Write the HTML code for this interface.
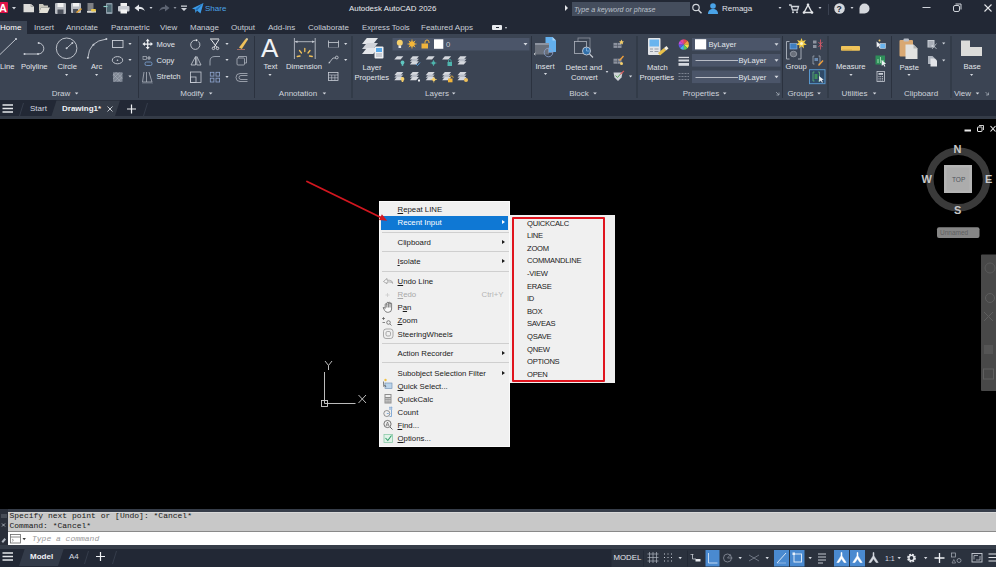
<!DOCTYPE html>
<html><head><meta charset="utf-8"><title>Autodesk AutoCAD 2026</title>
<style>
*{margin:0;padding:0;box-sizing:border-box}
html,body{width:996px;height:567px;overflow:hidden;background:#000}
body{position:relative;font-family:"Liberation Sans",sans-serif;font-size:8px;color:#d6dae0;line-height:1}
.a{position:absolute}
.t{position:absolute;white-space:nowrap;line-height:10px;height:10px}
#title{left:0;top:0;width:996px;height:20px;background:#222835}
#tabs{left:0;top:20px;width:996px;height:14px;background:#222835}
#ribbon{left:0;top:34px;width:996px;height:66px;background:#3b4453}
#ftabs{left:0;top:99.500px;width:996px;height:19.500px;background:#222835}
#canvas{left:0;top:119px;width:996px;height:389px;background:#000}
#cmd{left:0;top:511.500px;width:996px;height:20.500px;background:#c8c8c8}
#cmdin{left:0;top:532px;width:996px;height:13px;background:#fff}
#status{left:0;top:545px;width:996px;height:22px;background:#222835}
.sep{position:absolute;top:36px;width:1px;height:62px;background:#2c3340}
.pl{position:absolute;top:89px;white-space:nowrap;line-height:10px;color:#cdd2da;transform:translateX(-50%)}
.rl{font-size:7.6px;color:#e2e5ea}
.mono{font-family:"Liberation Mono",monospace;font-size:8px;color:#1a1a1a}
.mi{position:absolute;left:17.5px;white-space:nowrap;color:#1a1a1a;font-size:7.8px;line-height:10px}
.ms{position:absolute;left:2px;width:127px;height:1px;background:#cfcfcf}
.si{position:absolute;left:17px;white-space:nowrap;color:#1a1a1a;font-size:7.6px;letter-spacing:-0.25px;line-height:10px}
.arr{position:absolute;width:0;height:0;border-left:3px solid #1a1a1a;border-top:2.5px solid transparent;border-bottom:2.5px solid transparent;left:122px}
</style></head><body>
<div class="a" id="title"></div>
<div class="a" id="tabs"></div>

<!-- TITLE BAR -->
<div class="a" style="left:0;top:1.800px;width:8.200px;height:11.500px;background:#de1248;border-radius:0 1px 1px 0"></div>
<div class="t" style="left:-1px;top:2px;font-size:11px;font-weight:bold;color:#fff;line-height:12px;height:12px">A</div>
<svg class="a" style="left:0;top:0" width="996" height="20" viewBox="0 0 996 20">
 <path d="M12 7h4l-2 2.5z" fill="#cfd3da"/>
 <!-- new -->
 <path d="M23.500 4h7.500l3 2.500v5.700h-10.500z" fill="#dcdcda"/><path d="M31 4v2.500h3" fill="none" stroke="#9a9a98" stroke-width="0.800"/>
 <!-- open -->
 <path d="M39 4h4l1 1.5h4v2h-7l-2 5z" fill="#c9c7bd"/><path d="M41 7.5h9l-2.5 5.5h-8.5z" fill="#e3e1d8"/>
 <!-- save -->
 <rect x="55" y="3" width="11" height="11" rx="1" fill="#b9bcc2"/><rect x="57.5" y="3" width="6" height="4" fill="#f2f2f2"/><rect x="57.5" y="9.5" width="6" height="4.5" fill="#4a4f5a"/>
 <!-- save as -->
 <rect x="71" y="3" width="10" height="10" rx="1" fill="#b9bcc2"/><rect x="73" y="3" width="6" height="3.5" fill="#f2f2f2"/><rect x="73" y="9" width="5" height="4" fill="#4a4f5a"/><path d="M76 12l5-4 1 1.2-5 4z" fill="#e2a43c"/>
 <!-- web -->
 <rect x="87.5" y="3" width="6" height="10" fill="#7d7f83"/><rect x="87" y="11" width="9" height="1.6" fill="#d8d8d8"/><rect x="91" y="9" width="5" height="2.6" rx="1" fill="#e8c64a"/>
 <!-- mobile -->
 <rect x="106" y="3" width="6.5" height="11" rx="1" fill="#8a9aa6"/><rect x="107" y="4.5" width="4.5" height="7.5" fill="#4b6670"/><path d="M103.5 6.5h4" stroke="#8fd0c8" stroke-width="1.2"/>
 <!-- print -->
 <rect x="120.5" y="3" width="6.5" height="3.5" fill="#f0f0f0"/><rect x="118" y="6" width="11.5" height="5.5" rx="1" fill="#c9ccd2"/><rect x="120.5" y="9.5" width="6.5" height="4" fill="#f4f4f4"/>
 <!-- undo -->
 <path d="M134.5 8l4.5-3.5v2.2c3 0 5.2 1.2 5.8 4.5-1.4-1.7-3.2-2.1-5.8-2.1v2.4z" fill="#e4e6ea"/>
 <path d="M149.5 7h3l-1.5 2z" fill="#cfd3da"/>
 <!-- redo -->
 <path d="M169.5 8l-4.5-3.5v2.2c-3 0-5.2 1.2-5.800 4.500 1.400-1.700 3.200-2.100 5.800-2.100v2.400z" fill="#5d6472"/>
 <path d="M173.500 7h3l-1.500 2z" fill="#8d939f"/>
 <path d="M181 5.500h6v1.200h-6z M181 8h6l-3 3z" fill="#cfd3da"/>
 <!-- share -->
 <path d="M192 8.500l11.500-5.500-3 10.500-3.500-3-1.500 2.500-0.500-3.500z" fill="#3d9be6"/><path d="M195 9.500l8.500-6.500-6.500 7.500z" fill="#1f6fb8"/>
 <!-- search box -->
 <path d="M565 5l3 3-3 3z" fill="#e4e6ea"/>
 <rect x="572" y="2" width="118" height="14" fill="#444d5d"/>
 <!-- search icon -->
 <circle cx="696" cy="7.500" r="3.200" fill="none" stroke="#d0d4da" stroke-width="1.200"/><path d="M698.300 10l3.200 3.200" stroke="#d0d4da" stroke-width="1.400"/>
 <!-- user -->
 <circle cx="713" cy="6" r="2.800" fill="#4aa3e8"/><path d="M708 14c0-3.500 2-5 5-5s5 1.500 5 5z" fill="#4aa3e8"/>
 <path d="M778.500 7h3l-1.500 2z" fill="#cfd3da"/>
 <!-- cart -->
 <path d="M789 5h2l1.500 5h5l1-3.500h-6.500" fill="none" stroke="#d0d4da" stroke-width="1.300"/><circle cx="793" cy="12.300" r="1" fill="#d0d4da"/><circle cx="797" cy="12.300" r="1" fill="#d0d4da"/>
 <!-- A triangle -->
 <path d="M808 5l-4 7.500h8z" fill="none" stroke="#e4e6ea" stroke-width="1.400"/><circle cx="808" cy="4.800" r="1.300" fill="#e4e6ea"/><circle cx="804" cy="12.500" r="1.300" fill="#e4e6ea"/><circle cx="812" cy="12.500" r="1.300" fill="#e4e6ea"/>
 <path d="M818.500 7h3l-1.500 2z" fill="#cfd3da"/>
 <rect x="828" y="4" width="1" height="11" fill="#3a4150"/>
 <!-- help -->
 <circle cx="839.500" cy="8.500" r="5.300" fill="#d5d8dd"/>
 <path d="M850.500 7h3l-1.500 2z" fill="#cfd3da"/>
 <!-- chat -->
 <path d="M859.500 8.500a5 5 0 1 1 5 5h-5z" fill="#d5d8dd"/>
 <!-- window ctrls -->
 <rect x="922.500" y="7" width="8" height="1" fill="#cfd3da"/>
 <rect x="953.500" y="5.500" width="6" height="6" rx="1.500" fill="none" stroke="#cfd3da" stroke-width="1"/><path d="M955.500 4h5.500v5.500" fill="none" stroke="#cfd3da" stroke-width="1"/>
 <path d="M984.500 4.500l7 7M991.500 4.500l-7 7" stroke="#e4e6ea" stroke-width="1.100"/>
</svg>
<div class="t" style="left:205px;top:4px;font-size:8px;color:#4aa3e8">Share</div>
<div class="t" id="ttl" style="left:349px;top:4px;font-size:7.900px;color:#e8eaee">Autodesk AutoCAD 2026</div>
<div class="t" style="left:574px;top:4.700px;font-size:7.100px;color:#bcc2cc;font-style:italic">Type a keyword or phrase</div>
<div class="t" style="left:722px;top:4px;font-size:8px;color:#e0e3e8">Remaga</div>
<div class="t" style="left:836.500px;top:3.500px;font-size:8.500px;font-weight:bold;color:#222835">?</div>
<!-- RIBBON TABS -->
<div class="a" style="left:0;top:21px;width:27px;height:13px;background:#3b4453"></div>
<div class="t" style="left:0;top:23px;font-size:8px;color:#fff">Home</div>
<div class="t" style="left:34px;top:23px;color:#c9ced6">Insert</div>
<div class="t" style="left:66px;top:23px;color:#c9ced6">Annotate</div>
<div class="t" style="left:111px;top:23px;color:#c9ced6">Parametric</div>
<div class="t" style="left:160px;top:23px;color:#c9ced6">View</div>
<div class="t" style="left:190px;top:23px;color:#c9ced6">Manage</div>
<div class="t" style="left:231px;top:23px;color:#c9ced6">Output</div>
<div class="t" style="left:268px;top:23px;color:#c9ced6">Add-ins</div>
<div class="t" style="left:308px;top:23px;color:#c9ced6">Collaborate</div>
<div class="t" style="left:362px;top:23px;color:#c9ced6;font-size:7.700px">Express Tools</div>
<div class="t" style="left:421px;top:23px;color:#c9ced6">Featured Apps</div>
<div class="a" style="left:492px;top:25px;width:10px;height:5px;background:#e8eaee;border-radius:1px"></div>
<div class="a" style="left:496px;top:27px;width:3px;height:1px;background:#222835"></div>
<div class="a" style="left:505px;top:26.500px;width:0;height:0;border-top:2px solid #cfd3da;border-left:1.500px solid transparent;border-right:1.500px solid transparent"></div>
<div class="a" id="ribbon"></div>

<!-- RIBBON CONTENT -->
<svg class="a" style="left:0;top:0" width="996" height="120" viewBox="0 0 996 120">
<rect x="138" y="36" width="1" height="62" fill="#2b323f"/>
<rect x="254" y="36" width="1" height="62" fill="#2b323f"/>
<rect x="351.5" y="36" width="1" height="62" fill="#2b323f"/>
<rect x="531" y="36" width="1" height="62" fill="#2b323f"/>
<rect x="636.5" y="36" width="1" height="62" fill="#2b323f"/>
<rect x="782" y="36" width="1" height="62" fill="#2b323f"/>
<rect x="827.5" y="36" width="1" height="62" fill="#2b323f"/>
<rect x="891" y="36" width="1" height="62" fill="#2b323f"/>
<rect x="950.5" y="36" width="1" height="62" fill="#2b323f"/>
<path d="M0 54.5L16 39" stroke="#c9ced6" stroke-width="0.9" fill="none"/><circle cx="16" cy="39" r="1.1" fill="#c9ced6"/>
<path d="M24.500 54h13.500a5.500 5.500 0 0 0 0.600-11" stroke="#c9ced6" stroke-width="0.900" fill="none"/><circle cx="24.500" cy="54" r="1" fill="#c9ced6"/><circle cx="38" cy="54" r="1" fill="#c9ced6"/><circle cx="38.600" cy="43" r="1" fill="#c9ced6"/>
<circle cx="66.600" cy="48.300" r="10.300" stroke="#c9ced6" stroke-width="0.900" fill="none"/><path d="M66.600 48.300L72.400 43" stroke="#c9ced6" stroke-width="0.900"/><circle cx="66.600" cy="48.300" r="1" fill="#c9ced6"/><circle cx="72.400" cy="43" r="1" fill="#c9ced6"/>
<path d="M87.900 57.800Q89 41 106.400 39.100" stroke="#c9ced6" stroke-width="0.900" fill="none"/><circle cx="87.900" cy="57.800" r="1" fill="#c9ced6"/><circle cx="93.500" cy="44.800" r="1" fill="#c9ced6"/><circle cx="106.400" cy="39.100" r="1" fill="#c9ced6"/>
<path d="M65.0 74.0h3.2l-1.6 2z" fill="#d5d9e0"/>
<path d="M95.0 74.0h3.2l-1.6 2z" fill="#d5d9e0"/>
<rect x="112.500" y="40.500" width="10.500" height="7" stroke="#c9ced6" stroke-width="0.900" fill="none"/>
<ellipse cx="117.500" cy="60.200" rx="5.200" ry="3.600" stroke="#c9ced6" stroke-width="0.900" fill="none"/><circle cx="117.500" cy="60.200" r="0.800" fill="#c9ced6"/>
<rect x="113" y="72.300" width="9.500" height="9.500" fill="#7f8794"/><path d="M113 75.500l3-3M113 79l6.500-6.500M114 81.800l8.500-8.500M117.500 81.800l5-5M113 74l7.500 7.500M116 72.300l6.500 6.500" stroke="#aeb4be" stroke-width="0.500"/>
<path d="M128.4 43.0h3.2l-1.6 2z" fill="#d5d9e0"/>
<path d="M128.4 59.0h3.2l-1.6 2z" fill="#d5d9e0"/>
<path d="M128.4 75.5h3.2l-1.6 2z" fill="#d5d9e0"/>
<path d="M147.700 38.800l2 2.500h-1.400v2.200h2.200v-1.400l2.500 2-2.500 2v-1.400h-2.200v2.200h1.400l-2 2.500-2-2.500h1.400v-2.200h-2.200v1.400l-2.500-2 2.500-2v1.400h2.200v-2.200h-1.400z" fill="#f0f2f5"/>
<rect x="143" y="56.500" width="3.500" height="3" stroke="#aeb4be" stroke-width="0.700" fill="none"/><path d="M149 56v4M147 58h4" stroke="#c9ced6" stroke-width="0.800"/><rect x="145" y="62" width="7" height="3.500" rx="1.500" stroke="#7fa6d8" stroke-width="0.800" fill="none"/>
<path d="M144 72l-1.500 10h9.500l-3-10M146.500 72v10" stroke="#aeb4be" stroke-width="0.800" fill="none"/><path d="M142 83h11" stroke="#7d8592" stroke-width="0.700"/>
<path d="M198.500 41.500a4.600 4.600 0 1 1-3-1.300" stroke="#c9ced6" stroke-width="0.900" fill="none"/><circle cx="196.500" cy="40.300" r="1" fill="#f0f2f5"/>
<path d="M195.500 56.500l-4.500 8.500h4.500zM196.800 56.500l4.200 8.500h-4.200z" stroke="#c9ced6" stroke-width="0.800" fill="none"/>
<rect x="190.500" y="72" width="10.500" height="10.500" stroke="#c9ced6" stroke-width="0.800" fill="none"/><rect x="190.500" y="77" width="5.500" height="5.500" stroke="#c9ced6" stroke-width="0.800" fill="none"/>
<path d="M211 39.500l6 8M219 39.500l-5 8M210 39h9" stroke="#e8eaee" stroke-width="1" fill="none"/><circle cx="213.500" cy="48.300" r="1.300" stroke="#e8eaee" stroke-width="0.800" fill="none"/><circle cx="217.500" cy="48.300" r="1.300" stroke="#e8eaee" stroke-width="0.800" fill="none"/>
<path d="M210 65.500v-4.500q0-4.500 5-4.500h5" stroke="#98a0ad" stroke-width="1" fill="none"/>
<rect x="210.300" y="72.300" width="3.600" height="3.800" stroke="#8fa6d0" stroke-width="0.800" fill="none"/><rect x="216" y="72.300" width="3.600" height="3.800" stroke="#8fa6d0" stroke-width="0.800" fill="none"/><rect x="210.300" y="78.200" width="3.600" height="3.800" stroke="#8fa6d0" stroke-width="0.800" fill="none"/><rect x="216" y="78.200" width="3.600" height="3.800" stroke="#8fa6d0" stroke-width="0.800" fill="none"/>
<path d="M225.4 43.0h3.2l-1.6 2z" fill="#d5d9e0"/>
<path d="M225.4 59.0h3.2l-1.6 2z" fill="#d5d9e0"/>
<path d="M225.4 76.0h3.2l-1.6 2z" fill="#d5d9e0"/>
<path d="M239 47.500l6.500-8.500 1.800 1.500-5.500 8.500z" fill="#f0c15a"/><path d="M245.500 39l1.800 1.500 0.700-1.500-1-1z" fill="#f7e2a8"/><path d="M237 49.500h8" stroke="#c97b6a" stroke-width="0.700"/>
<rect x="237" y="58" width="7.500" height="7" rx="1" stroke="#aeb4be" stroke-width="0.800" fill="none"/><path d="M238.500 58v-1.500h8v6.500h-2" stroke="#aeb4be" stroke-width="0.800" fill="none"/>
<path d="M247.500 73.500h-7.500a3.500 3.500 0 0 0 0 8h7.500M247.500 75.500h-6.500a1.700 1.700 0 0 0 0 4h6.500" stroke="#aeb4be" stroke-width="0.800" fill="none"/>
<path d="M294.400 38v21M315.200 38v21M295 41.700h19.500" stroke="#c9ced6" stroke-width="0.800" fill="none"/><path d="M295 41.700l2.500-1.200v2.400zM314.600 41.700l-2.500-1.200v2.400z" fill="#c9ced6"/>
<path d="M304.800 51.500v-3M301.500 53l-2-2.500M308 53l2-2.500M300 56l-2.800 0.500M309.500 56l2.800 0.500" stroke="#f0c15a" stroke-width="1.300" stroke-linecap="round"/>
<path d="M268.4 74.0h3.2l-1.6 2z" fill="#d5d9e0"/>
<path d="M328.500 40.500v7M338.500 40.500v7M328.500 42.500h10" stroke="#c9ced6" stroke-width="0.800" fill="none"/><path d="M329 47.500h9" stroke="#7f8794" stroke-width="0.600"/>
<path d="M329 63l4-5h3" stroke="#c9ced6" stroke-width="0.800" fill="none"/><circle cx="336.800" cy="57.500" r="1.400" stroke="#c9ced6" stroke-width="0.800" fill="none"/><path d="M328.500 63.500l2-0.500-1.500-1.500z" fill="#c9ced6"/>
<rect x="328.500" y="72.500" width="9.500" height="8" stroke="#c9ced6" stroke-width="0.800" fill="none"/><path d="M328.500 75h9.500M328.500 77.800h9.500M331.700 75v5.500M334.900 75v5.500" stroke="#c9ced6" stroke-width="0.600"/>
<path d="M344.09999999999997 43.0h3.2l-1.6 2z" fill="#d5d9e0"/>
<path d="M344.09999999999997 59.0h3.2l-1.6 2z" fill="#d5d9e0"/>
</svg>
<div class="t rl" style="left:0;top:62px">Line</div>
<div class="t rl" style="left:21px;top:62px">Polyline</div>
<div class="t rl" style="left:57.500px;top:62px">Circle</div>
<div class="t rl" style="left:91px;top:62px">Arc</div>
<div class="t rl" style="left:156.500px;top:39.500px">Move</div>
<div class="t rl" style="left:156.500px;top:56px">Copy</div>
<div class="t rl" style="left:156.500px;top:72px">Stretch</div>
<div class="t" style="left:261px;top:35px;font-size:26px;line-height:26px;height:26px;color:#f0f2f5">A</div>
<div class="t rl" style="left:263.500px;top:62px">Text</div>
<div class="t rl" style="left:286px;top:62px">Dimension</div>
<div class="pl" style="left:61px">Draw</div>
<div class="pl" style="left:192px">Modify</div>
<div class="pl" style="left:298px">Annotation</div>
<svg class="a" style="left:0;top:0" width="996" height="120" viewBox="0 0 996 120">
<path d="M74.8 92.4h3.6l-1.8 2.2z" fill="#d5d9e0"/>
<path d="M208.89999999999998 92.4h3.6l-1.8 2.2z" fill="#d5d9e0"/>
<path d="M322.59999999999997 92.4h3.6l-1.8 2.2z" fill="#d5d9e0"/>
<path d="M451.9 92.4h3.6l-1.8 2.2z" fill="#d5d9e0"/>
<path d="M593.2 92.4h3.6l-1.8 2.2z" fill="#d5d9e0"/>
<path d="M722.9000000000001 92.4h3.6l-1.8 2.2z" fill="#d5d9e0"/>
<path d="M817.2 92.4h3.6l-1.8 2.2z" fill="#d5d9e0"/>
<path d="M872.8000000000001 92.4h3.6l-1.8 2.2z" fill="#d5d9e0"/>
<path d="M975.7 92.4h3.6l-1.8 2.2z" fill="#d5d9e0"/>
<path d="M776 92l3 3M779 92.500v2.500h-2.500" stroke="#aeb4be" stroke-width="0.700" fill="none"/>
<path d="M985.500 92l3 3M988.500 92.500v2.500h-2.500" stroke="#aeb4be" stroke-width="0.700" fill="none"/>
<path d="M366.8 38h11.2l-4.8 6h-11.2z" fill="#e4e6ea"/>
<path d="M366.8 43h11.2l-4.8 6h-11.2z" fill="#d0d3d9"/>
<path d="M366.8 48h11.2l-4.8 6h-11.2z" fill="#e4e6ea"/>
<rect x="374.500" y="46.500" width="9" height="12" rx="1" fill="#eef0f3"/><rect x="376" y="48" width="6" height="4" fill="#59a9e8"/><path d="M376 54h6M376 56h6" stroke="#8d939f" stroke-width="0.800"/>
<rect x="392.500" y="38" width="137" height="12.500" fill="#4b5569"/>
<circle cx="399.800" cy="42.800" r="3" fill="#f5cf6b"/><rect x="398.500" y="45.500" width="2.600" height="2.500" fill="#e8e8e8"/>
<circle cx="412" cy="44" r="2.800" fill="#f5b73a"/><path d="M412 39.500v9M407.500 44h9M408.800 40.800l6.400 6.400M415.200 40.800l-6.400 6.400" stroke="#f5b73a" stroke-width="0.900"/>
<rect x="421.500" y="43.500" width="6.500" height="5" fill="#f0b43c"/><path d="M425 43.500v-1.500a2 2 0 0 1 4 0v1" stroke="#f0b43c" stroke-width="1" fill="none"/>
<rect x="434" y="39.300" width="9.300" height="9.500" fill="#fff"/>
<path d="M523.5 43.099999999999994h4l-2.0 2.4z" fill="#d5d9e0"/>
<path d="M397.0 56.2h6.3l-2.6999999999999997 3.2h-6.3z" fill="#d5d8de"/>
<path d="M412.59999999999997 56.2h6.3l-2.6999999999999997 3.2h-6.3z" fill="#d5d8de"/>
<path d="M412.59999999999997 58.7h6.3l-2.6999999999999997 3.2h-6.3z" fill="#b9bec8"/>
<path d="M412.59999999999997 61.2h6.3l-2.6999999999999997 3.2h-6.3z" fill="#d5d8de"/>
<path d="M428.4 56.2h6.3l-2.6999999999999997 3.2h-6.3z" fill="#d5d8de"/>
<path d="M444.8 56.2h6.3l-2.6999999999999997 3.2h-6.3z" fill="#d5d8de"/>
<path d="M460.2 56.2h6.3l-2.6999999999999997 3.2h-6.3z" fill="#d5d8de"/>
<path d="M460.2 58.7h6.3l-2.6999999999999997 3.2h-6.3z" fill="#b9bec8"/>
<path d="M460.2 61.2h6.3l-2.6999999999999997 3.2h-6.3z" fill="#d5d8de"/>
<path d="M397.0 72.0h6.3l-2.6999999999999997 3.2h-6.3z" fill="#d5d8de"/>
<path d="M397.0 74.5h6.3l-2.6999999999999997 3.2h-6.3z" fill="#b9bec8"/>
<path d="M397.0 77.0h6.3l-2.6999999999999997 3.2h-6.3z" fill="#d5d8de"/>
<path d="M412.59999999999997 72.0h6.3l-2.6999999999999997 3.2h-6.3z" fill="#d5d8de"/>
<path d="M412.59999999999997 74.5h6.3l-2.6999999999999997 3.2h-6.3z" fill="#b9bec8"/>
<path d="M412.59999999999997 77.0h6.3l-2.6999999999999997 3.2h-6.3z" fill="#d5d8de"/>
<path d="M428.4 72.0h6.3l-2.6999999999999997 3.2h-6.3z" fill="#d5d8de"/>
<path d="M428.4 74.5h6.3l-2.6999999999999997 3.2h-6.3z" fill="#b9bec8"/>
<path d="M428.4 77.0h6.3l-2.6999999999999997 3.2h-6.3z" fill="#d5d8de"/>
<path d="M444.8 72.0h6.3l-2.6999999999999997 3.2h-6.3z" fill="#d5d8de"/>
<path d="M444.8 74.5h6.3l-2.6999999999999997 3.2h-6.3z" fill="#b9bec8"/>
<path d="M444.8 77.0h6.3l-2.6999999999999997 3.2h-6.3z" fill="#d5d8de"/>
<path d="M460.2 72.0h6.3l-2.6999999999999997 3.2h-6.3z" fill="#d5d8de"/>
<path d="M460.2 74.5h6.3l-2.6999999999999997 3.2h-6.3z" fill="#b9bec8"/>
<path d="M460.2 77.0h6.3l-2.6999999999999997 3.2h-6.3z" fill="#d5d8de"/>
<circle cx="402.500" cy="62.500" r="1.900" fill="#5fc6c0"/><rect x="401.700" y="64" width="1.600" height="1.800" fill="#5fc6c0"/>
<path d="M416 64l1.500 1.500 2.500-3" stroke="#5b9fd8" stroke-width="1" fill="none"/>
<circle cx="433.500" cy="63" r="1.800" fill="#4fb5ae"/><path d="M433.500 60v6M430.500 63h6" stroke="#4fb5ae" stroke-width="0.700"/>
<rect x="447.500" y="62" width="4.500" height="4" fill="#4fb5ae"/><path d="M448.500 62v-1.200a1.300 1.300 0 0 1 2.600 0v1.200" stroke="#4fb5ae" stroke-width="0.800" fill="none"/>
<circle cx="402.500" cy="79" r="1.900" fill="#f5cf6b"/><rect x="401.700" y="80.500" width="1.600" height="1.500" fill="#f5cf6b"/>
<rect x="418" y="79.500" width="2" height="2" fill="#f0f2f5"/>
<circle cx="433.800" cy="79.500" r="1.700" fill="#f5cf6b"/><path d="M433.800 76.500v6M430.800 79.500h6" stroke="#f5cf6b" stroke-width="0.700"/>
<rect x="448" y="78.500" width="4.500" height="3.800" fill="#f0b43c"/><path d="M450.500 78.500v-1.200a1.300 1.300 0 0 1 2.600 0v0.600" stroke="#f0b43c" stroke-width="0.800" fill="none"/>
<circle cx="466" cy="80" r="2" fill="#f0c15a"/>
<path d="M545.500 37h7l3.500 3.500v11.500h-10.500z" fill="#63b0ee"/><path d="M552.500 37v3.500h3.500z" fill="#a9d4f7"/>
<rect x="535" y="43" width="14" height="11.500" fill="#6a707b"/><rect x="535" y="43" width="14" height="2" fill="#8d939f"/>
<circle cx="548.500" cy="52.500" r="4.300" stroke="#8fa6d0" stroke-width="0.800" fill="none"/><path d="M548.500 48.200v4.300h4.300" stroke="#8fa6d0" stroke-width="0.700" fill="none"/>
<path d="M535.500 53l-1.500 1 1.500 1" stroke="#f0f2f5" stroke-width="0.700" fill="none"/>
<path d="M543.9 73.0h3.2l-1.6 2z" fill="#d5d9e0"/>
<rect x="578" y="38" width="12" height="12" stroke="#8d939f" stroke-width="0.800" fill="none"/><rect x="574.500" y="41.500" width="12" height="12" stroke="#aeb4be" stroke-width="0.800" fill="#3b4453"/>
<circle cx="586.500" cy="51" r="4" fill="#2f6ea8" stroke="#c9ced6" stroke-width="0.900"/><path d="M589.500 54l3.500 3.500" stroke="#c9ced6" stroke-width="1.100"/><path d="M586.500 47.500v3.500h3" stroke="#8fc0ee" stroke-width="0.700" fill="none"/>
<path d="M605.7 71.1h2.6l-1.3 1.8z" fill="#d5d9e0"/>
<rect x="613.500" y="42.9" width="8" height="5" fill="#8d939f"/><path d="M613.500 45.4h8M617.500 42.9v5" stroke="#4a5160" stroke-width="0.600"/>
<rect x="613.500" y="58.7" width="8" height="5" fill="#8d939f"/><path d="M613.500 61.2h8M617.500 58.7v5" stroke="#4a5160" stroke-width="0.600"/>
<path d="M621.500 39.500l0.800 1.700 1.700 0.300-1.300 1.200 0.300 1.800-1.500-0.900-1.500 0.900 0.300-1.800-1.300-1.200 1.700-0.300z" fill="#f5cf6b"/>
<path d="M619 60l4-4.500 1 1-4 4.500z" fill="#f0a03c"/><circle cx="621.500" cy="63.500" r="1.500" fill="#f5cf6b"/>
<path d="M613.500 72.500h9l-1 5-3.500 3.500-3.500-3.500z" fill="#d0d3d9"/><path d="M615.500 75.500l2 2 3-3.500" stroke="#5aa85a" stroke-width="1" fill="none"/><path d="M620 74l3.500-3.500 0.800 0.800-3.500 3.500z" fill="#e05a5a"/>
<path d="M629.0 75.5h3.2l-1.6 2z" fill="#d5d9e0"/>
<rect x="648" y="38" width="12.500" height="17" rx="1" fill="#e2e4e8"/><rect x="649.500" y="39.500" width="9.500" height="7" fill="#6ab4ee"/><path d="M650 49h3M650 51.500h3M654.500 49h4M654.500 51.500h4" stroke="#8d939f" stroke-width="0.900"/>
<path d="M658 53l6-5 2 2.500-6 5z" fill="#e8c04a"/><path d="M664 48l2.500-2 2 2.500-2.500 2z" fill="#f5efe0"/>
<path d="M683.8 44.5L683.80 39.30A5.2 5.2 0 0 1 687.48 40.82z" fill="#e84a4a"/>
<path d="M683.8 44.5L687.48 40.82A5.2 5.2 0 0 1 689.00 44.50z" fill="#f0a03c"/>
<path d="M683.8 44.5L689.00 44.50A5.2 5.2 0 0 1 687.48 48.18z" fill="#f5e04a"/>
<path d="M683.8 44.5L687.48 48.18A5.2 5.2 0 0 1 683.80 49.70z" fill="#5ac85a"/>
<path d="M683.8 44.5L683.80 49.70A5.2 5.2 0 0 1 680.12 48.18z" fill="#4ab4e8"/>
<path d="M683.8 44.5L680.12 48.18A5.2 5.2 0 0 1 678.60 44.50z" fill="#5a5ae8"/>
<path d="M683.8 44.5L678.60 44.50A5.2 5.2 0 0 1 680.12 40.82z" fill="#c04ae0"/>
<path d="M683.8 44.5L680.12 40.82A5.2 5.2 0 0 1 683.80 39.30z" fill="#e84a9a"/>
<rect x="678.500" y="56.800" width="10.500" height="1.300" fill="#d5d8de"/><rect x="678.500" y="59.500" width="10.500" height="2" fill="#d5d8de"/><rect x="678.500" y="63" width="10.500" height="2.800" fill="#d5d8de"/>
<path d="M678.500 73.500h10.500M678.500 76.500h10.500M678.500 79.500h10.500" stroke="#8d939f" stroke-width="0.800" stroke-dasharray="2 1"/>
<rect x="692" y="38" width="88.500" height="12.600" fill="#4b5569"/>
<path d="M774.5 43.3h4l-2.0 2.4z" fill="#d5d9e0"/>
<rect x="692" y="54" width="88.500" height="12.600" fill="#4b5569"/>
<path d="M774.5 59.3h4l-2.0 2.4z" fill="#d5d9e0"/>
<rect x="692" y="70.5" width="88.500" height="12.600" fill="#4b5569"/>
<path d="M774.5 75.8h4l-2.0 2.4z" fill="#d5d9e0"/>
<rect x="695" y="39.200" width="11.200" height="10.200" fill="#fff"/>
<path d="M695.500 60.500h42.500M695.500 77.500h42.500" stroke="#d5d8de" stroke-width="0.800"/>
<path d="M789.500 41.500h-3v17.500h3M798 41.500h3v17.500h-3" stroke="#aeb4be" stroke-width="0.900" fill="none"/><rect x="790" y="43.500" width="7" height="5.500" fill="#3f7fc0" stroke="#8fb8e8" stroke-width="0.600"/><ellipse cx="793.500" cy="54" rx="3.300" ry="2.800" fill="#6a707b" stroke="#aeb4be" stroke-width="0.600"/>
<path d="M801.500 38l1.200 3 3.200-1-1.700 2.800 2.600 2-3.200 0.500 0.300 3.200-2.400-2.200-2.400 2.200 0.300-3.200-3.200-0.500 2.600-2-1.700-2.800 3.200 1z" fill="#f5cf4a"/><circle cx="801.500" cy="43.500" r="1.500" fill="#fff6c8"/>
<rect x="813" y="40.500" width="3.500" height="3" fill="#8d939f"/><rect x="813" y="45" width="3.500" height="3" fill="#8d939f"/><path d="M820.500 39.500v10M818.500 42l4 5M822.500 42l-4 5" stroke="#e05a6a" stroke-width="0.800"/>
<path d="M814.500 56h-1.500v8h1.500M818.500 56h1.500v8h-1.500" stroke="#aeb4be" stroke-width="0.700" fill="none"/><rect x="814.500" y="58" width="3.500" height="3" fill="#6a8ab0"/><path d="M818 65l4.500-5 1 1-4.500 5z" fill="#f0a03c"/>
<rect x="809.500" y="69.700" width="15.500" height="14" fill="#2f4a68" stroke="#5b9fd8" stroke-width="0.900"/><path d="M814.500 72h-1.500v9h1.500M818 72h1.500v9h-1.500" stroke="#5fb87a" stroke-width="0.800" fill="none"/><rect x="814.500" y="74" width="3" height="5" fill="#3f8f5a"/><path d="M819 76l0.300 6 1.500-1.500 1.200 2.300 0.900-0.500-1.200-2.200 2-0.300z" fill="#f0f2f5"/>
<rect x="841" y="46" width="19" height="4.800" rx="0.800" fill="#f0c45a"/><path d="M843 49v1.800M845 49v1.800M847 49v1.800M849 49v1.800M851 49v1.800" stroke="#b8923a" stroke-width="0.500"/>
<path d="M849.4 74.0h3.2l-1.6 2z" fill="#d5d9e0"/>
<path d="M876.500 41.500l0.300 6 1.500-1.500 1.200 2.300 0.900-0.500-1.200-2.200 2-0.300z" fill="#f0f2f5"/><rect x="880" y="43.500" width="5.500" height="5" fill="#6ab4ee" stroke="#d5d8de" stroke-width="0.600"/><circle cx="879.500" cy="40.500" r="1" fill="#f5cf6b"/>
<rect x="875.500" y="55.500" width="9.500" height="9" fill="#2f8f5a"/><path d="M878 63v-4M880.500 63v-6M883 63v-3" stroke="#a8e0b8" stroke-width="0.900"/><path d="M881.500 60l0.300 6 1.500-1.500 1.200 2.300 0.900-0.500-1.200-2.200 2-0.300z" fill="#f0f2f5"/>
<rect x="877" y="71.500" width="7.500" height="10" stroke="#c9ced6" stroke-width="0.800" fill="none"/><rect x="878.500" y="73" width="4.500" height="1.800" fill="#c9ced6"/><path d="M878.500 76.500h4.500M878.500 78.300h4.500M878.500 80h4.500" stroke="#c9ced6" stroke-width="0.900" stroke-dasharray="1 0.750"/>
<rect x="899.500" y="40" width="13.500" height="16.500" rx="1" fill="#d9a872"/><rect x="903.500" y="38.500" width="5.500" height="3" rx="1" fill="#b9bec8"/><path d="M905.500 44.500h8l4 4v10.500h-12z" fill="#e2e2e0"/><path d="M913.500 44.500v4h4z" fill="#b5b5b3"/>
<path d="M907.4 74.0h3.2l-1.6 2z" fill="#d5d9e0"/>
<rect x="927.500" y="40" width="7" height="7.500" fill="#c9ced6"/><path d="M928.500 42h5M928.500 44h5M928.500 46h3" stroke="#5a6170" stroke-width="0.600"/><path d="M932 43.500l4.500 5.500M936.500 43.500l-4.500 5.500" stroke="#aeb4be" stroke-width="0.900"/>
<path d="M928 56h4.500l2 2v6h-6.500z" fill="#aeb4be"/><path d="M930.500 58.500h4.500l2 2v6h-6.500z" fill="#e2e4e8"/>
<path d="M942.1 42.5h3.2l-1.6 2z" fill="#d5d9e0"/>
<path d="M942.1 59.5h3.2l-1.6 2z" fill="#d5d9e0"/>
<path d="M961 40.600h9v6.400h12v9h-21z" fill="#dcdcda"/>
<path d="M970.0 74.0h3.2l-1.6 2z" fill="#d5d9e0"/>
</svg>
<div class="t rl" style="left:362.500px;top:62.500px">Layer</div>
<div class="t rl" style="left:354.500px;top:72.500px">Properties</div>
<div class="t rl" style="left:446px;top:39.500px;color:#c9ced6">0</div>
<div class="t rl" style="left:535.500px;top:61.500px">Insert</div>
<div class="t rl" style="left:565.500px;top:62.500px">Detect and</div>
<div class="t rl" style="left:571px;top:73px">Convert</div>
<div class="t rl" style="left:647px;top:62.500px">Match</div>
<div class="t rl" style="left:639.500px;top:72.500px">Properties</div>
<div class="t rl" style="left:708.500px;top:39.500px">ByLayer</div>
<div class="t rl" style="left:738.500px;top:55.500px">ByLayer</div>
<div class="t rl" style="left:738.500px;top:72.500px">ByLayer</div>
<div class="t rl" style="left:785.500px;top:62px">Group</div>
<div class="t rl" style="left:836px;top:62px">Measure</div>
<div class="t rl" style="left:899.500px;top:62.500px">Paste</div>
<div class="t rl" style="left:963.500px;top:62px">Base</div>
<div class="pl" style="left:437px">Layers</div>
<div class="pl" style="left:579px">Block</div>
<div class="pl" style="left:701px">Properties</div>
<div class="pl" style="left:800.500px">Groups</div>
<div class="pl" style="left:854.500px">Utilities</div>
<div class="pl" style="left:921px">Clipboard</div>
<div class="pl" style="left:962.500px">View</div>
<!-- RIBBON3 -->
<div class="a" id="ftabs"></div>
<div class="a" id="canvas"></div>
<div class="a" id="cmd"></div>
<div class="a" id="cmdin"></div>
<div class="a" id="status"></div>

<!-- FILE TABS -->
<div class="a" style="left:0;top:116px;width:996px;height:3px;background:#343b47"></div>
<svg class="a" style="left:0;top:99px" width="200" height="20" viewBox="0 99 200 20">
 <path d="M2.500 105h10.500M2.500 108.500h10.500M2.500 112h10.500" stroke="#e4e6ea" stroke-width="1.300"/>
 <path d="M19.500 116l4-13" stroke="#3a4150" stroke-width="0.800"/>
 <path d="M51.500 116l5-15.500h63.500l-5 15.500z" fill="#343b47"/>
 <path d="M107.500 106.500l5 5M112.500 106.500l-5 5" stroke="#d5d9e0" stroke-width="0.900"/>
 <path d="M131.500 104.500v9M127 109h9" stroke="#f0f2f5" stroke-width="1.200"/>
 <path d="M143.500 116l4-13" stroke="#3a4150" stroke-width="0.800"/>
</svg>
<div class="t" style="left:30px;top:104px;font-size:8px;color:#d5d9e0">Start</div>
<div class="t" style="left:62px;top:104px;font-size:8px;font-weight:bold;color:#f0f2f5">Drawing1*</div>
<!-- CANVAS ITEMS -->
<svg class="a" style="left:0;top:119px" width="996" height="389" viewBox="0 119 996 389">
 <!-- UCS -->
 <path d="M324.500 372v31.500h31" stroke="#d0d0d0" stroke-width="0.900" fill="none"/>
 <rect x="321.500" y="400.500" width="6" height="6" stroke="#d0d0d0" stroke-width="0.900" fill="none"/>
 <path d="M325 361l3.500 4.500 3.500-4.500M328.500 365.500v4.500" stroke="#d0d0d0" stroke-width="0.900" fill="none"/>
 <path d="M358.500 395l7.500 8M366 395l-7.500 8" stroke="#d0d0d0" stroke-width="0.900" fill="none"/>
 <!-- viewport controls -->
 <rect x="964.500" y="129.500" width="6.500" height="2" fill="#e8e8e8"/>
 <rect x="977.500" y="127" width="4.500" height="4.500" rx="0.500" stroke="#e8e8e8" stroke-width="1" fill="none"/><path d="M979 125.500h4.500v4.500" stroke="#e8e8e8" stroke-width="0.900" fill="none"/>
 <path d="M990.500 126l5 5.500M995.500 126l-5 5.500" stroke="#e8e8e8" stroke-width="1.100"/>
 <!-- viewcube -->
 <circle cx="958.200" cy="179.500" r="28.300" stroke="#3a3a3a" stroke-width="7.400" fill="none"/>
 <rect x="944" y="165" width="28" height="28" fill="#b4b4b4"/>
 <rect x="946.500" y="167.500" width="23" height="23" fill="#acacac"/>
 <rect x="937" y="227.300" width="42.500" height="10.700" rx="2" fill="#868686"/>
 <!-- navbar -->
 <rect x="981" y="254.500" width="16" height="136.500" rx="1" fill="#484848"/>
 <circle cx="990" cy="268" r="5" stroke="#5a5a5a" stroke-width="1" fill="none"/>
 <circle cx="990" cy="298" r="4.500" stroke="#5e5e5e" stroke-width="1" fill="none"/>
 <path d="M984 312l9 9M993 312l-9 9" stroke="#5e5e5e" stroke-width="1"/>
 <rect x="984" y="345" width="9" height="9" fill="#555"/>
 <rect x="983.500" y="369" width="10" height="10" stroke="#5e5e5e" stroke-width="1" fill="none"/>
</svg>
<div class="t" style="left:953.500px;top:143px;font-size:11px;font-weight:bold;color:#c8c8c8;line-height:12px;height:12px">N</div>
<div class="t" style="left:954px;top:204px;font-size:11px;font-weight:bold;color:#c8c8c8;line-height:12px;height:12px">S</div>
<div class="t" style="left:921.500px;top:173px;font-size:11px;font-weight:bold;color:#c8c8c8;line-height:12px;height:12px">W</div>
<div class="t" style="left:985px;top:173px;font-size:11px;font-weight:bold;color:#c8c8c8;line-height:12px;height:12px">E</div>
<div class="t" style="left:952px;top:174.500px;font-size:6.500px;color:#50545c;line-height:9px;height:9px">TOP</div>
<div class="t" style="left:940px;top:228.500px;font-size:6.500px;color:#5e5e5e;line-height:8px;height:8px">Unnamed</div>
<!-- CONTEXT MENU -->
<div class="a" id="menu" style="left:379px;top:201px;width:131px;height:245.500px;background:#f0f0f0;border:1px solid #fafafa">
 <div class="a" style="left:1px;top:14px;width:127px;height:13.500px;background:#0f78d4"></div>
 <div class="mi" style="top:3px"><u>R</u>epeat LINE</div>
 <div class="mi" style="top:16px;color:#fff">Recent Input</div>
 <div class="arr" style="top:18px;border-left-color:#fff"></div>
 <div class="ms" style="top:30px"></div>
 <div class="mi" style="top:35.500px">Clipboard</div>
 <div class="arr" style="top:37.500px"></div>
 <div class="ms" style="top:49px"></div>
 <div class="mi" style="top:55px"><u>I</u>solate</div>
 <div class="arr" style="top:57px"></div>
 <div class="ms" style="top:68.500px"></div>
 <div class="mi" style="top:75px"><u>U</u>ndo Line</div>
 <div class="mi" style="top:88px;color:#a8a8a8"><u>R</u>edo</div>
 <div class="mi" style="top:88px;left:101.500px;color:#b4b4b4">Ctrl+Y</div>
 <div class="mi" style="top:101px">P<u>a</u>n</div>
 <div class="mi" style="top:114px"><u>Z</u>oom</div>
 <div class="mi" style="top:127.500px">SteeringWheels</div>
 <div class="ms" style="top:141px"></div>
 <div class="mi" style="top:146.500px">Action Recorder</div>
 <div class="arr" style="top:148.500px"></div>
 <div class="ms" style="top:160px"></div>
 <div class="mi" style="top:166.700px">Subobject Selection Filter</div>
 <div class="arr" style="top:168.700px"></div>
 <div class="mi" style="top:180px"><u>Q</u>uick Select...</div>
 <div class="mi" style="top:193px">QuickCalc</div>
 <div class="mi" style="top:205.500px">Count</div>
 <div class="mi" style="top:218.500px"><u>F</u>ind...</div>
 <div class="mi" style="top:231.500px"><u>O</u>ptions...</div>
 <svg class="a" style="left:0;top:0" width="20" height="245" viewBox="0 0 20 245">
  <path d="M3.500 79.500l3.500-3v1.800h2.500q3 0.200 3.200 3-1.200-1.500-3.200-1.400h-2.500v1.800z" stroke="#8e8e8e" stroke-width="0.700" fill="#f6f6f6" stroke-linejoin="round"/>
  <path d="M7.500 91v4M5.500 93h4" stroke="#c8c8c8" stroke-width="0.700"/>
  <path d="M5.200 106.500v-4a0.800 0.800 0 0 1 1.600 0v-1.300a0.800 0.800 0 0 1 1.600 0v-0.200a0.800 0.800 0 0 1 1.600 0v0.700a0.800 0.800 0 0 1 1.600 0v5.300q0 3.300-3.300 3.300h-0.800q-1.800 0-2.800-1.800l-1.600-2.800q0.900-0.900 2.100 0.800zM6.800 102.500v3M8.400 101.200v4.300M10 101v4.500" stroke="#4a4a4a" stroke-width="0.700" fill="#fafafa" stroke-linejoin="round"/>
  <circle cx="8.500" cy="120.500" r="1.800" stroke="#555" stroke-width="0.700" fill="none"/><path d="M10 122l1.500 1.500M3.500 115v3M2 116.500h3M2.500 120.500h2.500" stroke="#555" stroke-width="0.700"/>
  <rect x="3.500" y="127" width="9.500" height="9.500" rx="2.500" stroke="#8a8a8a" stroke-width="0.700" fill="none"/><rect x="6" y="129.500" width="4.500" height="4.500" rx="1.300" stroke="#8a8a8a" stroke-width="0.700" fill="none"/>
  <rect x="5" y="181" width="7" height="5.500" fill="#bcd4ea" stroke="#6a8ab0" stroke-width="0.600"/><path d="M3.500 179.500l0.300 5 1.200-1.200 1 1.800" stroke="#444" stroke-width="0.700" fill="none"/><circle cx="5.500" cy="178" r="1.200" fill="#f0c040"/>
  <rect x="4.500" y="192" width="7" height="9.500" fill="#8e8e8e"/><rect x="5.500" y="193" width="5" height="2" fill="#f0f0f0"/><path d="M5.500 196.700h5M5.500 198.300h5M5.500 199.900h5" stroke="#f0f0f0" stroke-width="0.900" stroke-dasharray="1.200 0.700"/>
  <circle cx="6.800" cy="211.500" r="3" stroke="#6a6a6a" stroke-width="0.700" fill="none"/><path d="M6.800 211.500h2M11.500 208v6.500h-2" stroke="#6a9ad0" stroke-width="0.800" fill="none"/><path d="M9 205.500h3.500M9 207h3.500M10 204.500v3.500M11.500 204.500v3.500" stroke="#6a9ad0" stroke-width="0.500"/>
  <circle cx="7.500" cy="222" r="3.600" stroke="#555" stroke-width="0.800" fill="none"/><path d="M10 225l2.500 2.500" stroke="#555" stroke-width="0.900"/><path d="M6 224l1.500-4 1.500 4M6.500 223h2" stroke="#555" stroke-width="0.600" fill="none"/>
  <rect x="4" y="232.500" width="8.500" height="8" stroke="#8ccaa8" stroke-width="0.800" fill="#e0f2e8"/><path d="M5.500 236l2.300 2.500 3.700-5" stroke="#2f9f6a" stroke-width="1.100" fill="none"/>
 </svg>
</div>
<!-- SUBMENU -->
<div class="a" id="sub" style="left:510px;top:214.500px;width:105px;height:168.500px;background:#f0f0f0">
 <div class="a" style="left:1.500px;top:2px;width:93.500px;height:165px;border:2px solid #e0141e;border-radius:1px"></div>
 <div class="si" style="top:4px">QUICKCALC</div>
 <div class="si" style="top:16.600px">LINE</div>
 <div class="si" style="top:29.200px">ZOOM</div>
 <div class="si" style="top:41.800px">COMMANDLINE</div>
 <div class="si" style="top:54.400px">-VIEW</div>
 <div class="si" style="top:67px">ERASE</div>
 <div class="si" style="top:79.600px">ID</div>
 <div class="si" style="top:92.200px">BOX</div>
 <div class="si" style="top:104.800px">SAVEAS</div>
 <div class="si" style="top:117.400px">QSAVE</div>
 <div class="si" style="top:130px">QNEW</div>
 <div class="si" style="top:142.600px">OPTIONS</div>
 <div class="si" style="top:155.200px">OPEN</div>
</div>
<!-- RED ARROW -->
<svg class="a" style="left:300px;top:175px" width="100" height="55" viewBox="300 175 100 55">
 <path d="M307 181.500L382 218" stroke="#d2161f" stroke-width="1.900" stroke-linecap="round"/>
 <path d="M387.200 220.800l-8.300-0.800 3-5.700z" fill="#d2161f"/>
</svg>
<!-- COMMAND LINE -->
<div class="a" style="left:0;top:509px;width:996px;height:2.500px;background:#363d49"></div><div class="a" style="left:8px;top:511.500px;width:988px;height:1.500px;background:#d8d8d8"></div><div class="a" style="left:0;top:509px;width:8px;height:37px;background:#2a2f3a"></div>
<div class="a" style="left:8px;top:531px;width:988px;height:1px;background:#8a8a8a"></div>
<div class="a" style="left:0;top:545px;width:996px;height:3.500px;background:#363d49"></div>
<svg class="a" style="left:0;top:508px" width="40" height="39" viewBox="0 508 40 39">
 <path d="M1.500 515h1M3.500 515h1M5.500 515h1M1.500 517h1M3.500 517h1M5.500 517h1" stroke="#aeb4be" stroke-width="0.900"/>
 <path d="M2 523.500l3 3M5 523.500l-3 3" stroke="#aeb4be" stroke-width="0.900"/>
 <path d="M1.500 541.500l3-3.500 1.500 1.500-3 3.500z" fill="#aeb4be"/>
 <rect x="10.500" y="534.500" width="10" height="8.500" stroke="#6a6a6a" stroke-width="0.800" fill="#fff"/><path d="M10.500 537h10" stroke="#6a6a6a" stroke-width="0.800"/><path d="M12 539l1.500 1.200-1.500 1.200" stroke="#6a6a6a" stroke-width="0.600" fill="none"/>
 <path d="M22.500 538h3.400l-1.700 2.200z" fill="#3a3a3a"/>
</svg>
<div class="t mono" style="left:9.500px;top:511px">Specify next point or [Undo]: *Cancel*</div>
<div class="t mono" style="left:9.500px;top:520.500px">Command: *Cancel*</div>
<div class="t mono" style="left:32px;top:534px;font-style:italic;color:#9a9a9a">Type a command</div>
<!-- STATUS BAR -->
<svg class="a" style="left:0;top:547px" width="996" height="20" viewBox="0 547 996 20">
 <path d="M2.500 553h10.500M2.500 556.500h10.500M2.500 560h10.500" stroke="#e4e6ea" stroke-width="1.300"/>
 <path d="M19 566l6-18h39l-6 18z" fill="#333b49"/>
 <path d="M84.500 564l4-13M112.500 564l4-13" stroke="#3a4150" stroke-width="0.800"/>
 <path d="M100.500 552v9M96 556.500h9" stroke="#f0f2f5" stroke-width="1.200"/>
 <g transform="translate(0,1)"><rect x="611.500" y="548.500" width="385" height="18" fill="#2b323e"/><path d="M643.500 549.500v16M687.500 549.500v16" stroke="#222835" stroke-width="0.800"/>
 <!-- grid -->
 <path d="M649.500 551v11M653 551v11M656.500 551v11M647.500 553h11M647.500 556.500h11M647.500 560h11" stroke="#aeb4be" stroke-width="0.700"/>
 <path d="M664 553h1M667.500 553h1M671 553h1M664 556.500h1M667.500 556.500h1M671 556.500h1M664 560h1M667.500 560h1M671 560h1" stroke="#c9ced6" stroke-width="1"/>
 <path d="M678.500 556h3.400l-1.700 2.200z" fill="#d5d9e0"/>
 <path d="M692.500 553v5h3.500" stroke="#c9ced6" stroke-width="0.800" fill="none"/><rect x="695.500" y="558" width="5" height="2.500" fill="#e8eaee"/><path d="M690.500 553.500h3" stroke="#c9ced6" stroke-width="0.700"/>
 <rect x="705.500" y="549" width="14" height="16.500" fill="#4a8ad0"/><path d="M708.500 552v10h9" stroke="#cfe2f7" stroke-width="0.900" fill="none"/>
 <circle cx="727.500" cy="557" r="4" stroke="#8d939f" stroke-width="0.800" fill="none"/><path d="M727.500 557h5M727.500 557l3-3.500" stroke="#8d939f" stroke-width="0.700"/>
 <path d="M738.500 556h3.400l-1.700 2.200z" fill="#d5d9e0"/>
 <path d="M749 554l10 6M749 560l10-6" stroke="#7d8592" stroke-width="0.800"/>
 <path d="M765.500 556h3.400l-1.700 2.200z" fill="#d5d9e0"/>
 <rect x="774" y="549" width="15" height="16.500" fill="#4a8ad0"/><path d="M777 562l9-10" stroke="#e8f0fa" stroke-width="0.900"/><path d="M777 562h9" stroke="#b8d0ee" stroke-width="0.600"/>
 <rect x="790" y="549" width="14.500" height="16.500" fill="#4a8ad0"/><rect x="794" y="553" width="7.500" height="8" stroke="#e8f0fa" stroke-width="0.900" fill="none"/><rect x="792.500" y="551.500" width="2.500" height="2.500" fill="#e8f0fa"/>
 <path d="M808.500 556h3.400l-1.700 2.200z" fill="#d5d9e0"/>
 <path d="M818 553h8M818 556h8M818 559h8M818 562h5" stroke="#d5d9e0" stroke-width="0.900"/>
 <rect x="834" y="549" width="15" height="16.500" fill="#4a8ad0"/><rect x="850" y="549" width="15" height="16.500" fill="#4a8ad0"/>
 <path d="M841 551.500l1 0v3.500l4.200 6.500h-2.200l-2.500-3.800-2.500 3.800h-2.200l4.200-6.500z" fill="#fff" stroke="#fff" stroke-width="0.500" stroke-linejoin="round"/>
 <path d="M857 551.500l1 0v3.500l4.200 6.500h-2.200l-2.500-3.800-2.500 3.800h-2.200l4.200-6.500z" fill="#fff" stroke="#fff" stroke-width="0.500" stroke-linejoin="round"/>
 <path d="M873 551.500l1 0v3.500l4.200 6.500h-2.200l-2.500-3.800-2.500 3.800h-2.200l4.200-6.500z" fill="#d5d9e0" stroke="#d5d9e0" stroke-width="0.500" stroke-linejoin="round"/>
 <path d="M897.500 556h3.400l-1.700 2.200z" fill="#d5d9e0"/>
 <circle cx="911.500" cy="557" r="3.300" stroke="#e8eaee" stroke-width="2.200" fill="none" stroke-dasharray="1.700 0.900"/><circle cx="911.500" cy="557" r="2.600" stroke="#e8eaee" stroke-width="1.300" fill="none"/>
 <path d="M924 556h3.400l-1.700 2.200z" fill="#d5d9e0"/>
 <path d="M939.500 552v10M934.500 557h10" stroke="#f0f2f5" stroke-width="1.300"/>
 <rect x="951.500" y="552" width="4" height="4" stroke="#aeb4be" stroke-width="0.700" fill="none"/><circle cx="959" cy="559.500" r="2" stroke="#aeb4be" stroke-width="0.700" fill="none"/><path d="M952 562l1.800-3.500 1.800 3.500z" stroke="#aeb4be" stroke-width="0.600" fill="none"/>
 <rect x="972" y="552.500" width="10" height="8.500" stroke="#c9ced6" stroke-width="0.900" fill="none"/><path d="M974 558.500v-4h4M980 555v4h-4" stroke="#c9ced6" stroke-width="0.700" fill="none"/>
 <path d="M988.500 553h7.500M988.500 556.500h7.500M988.500 560h7.500" stroke="#e4e6ea" stroke-width="1.200"/>
</g>
</svg>
<div class="t" style="left:30px;top:552px;font-size:8px;font-weight:bold;color:#f0f2f5">Model</div>
<div class="t" style="left:69px;top:552px;font-size:8px;color:#d5d9e0">A4</div>
<div class="t" style="left:613.500px;top:553px;font-size:7.800px;color:#e8eaee">MODEL</div>
<div class="t" style="left:885px;top:553.500px;font-size:7px;color:#d5d9e0">1:1</div>
</body></html>
